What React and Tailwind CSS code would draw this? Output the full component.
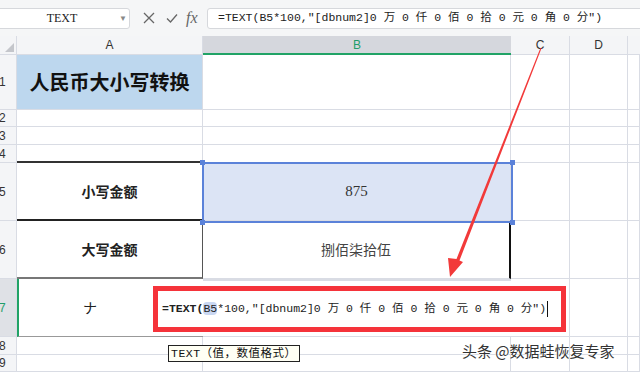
const LINE = 'border-[#d9dce4]'
const CJK = "font-['Noto_Sans_CJK_SC',sans-serif]"
const MONO = "font-['Liberation_Mono','Noto_Sans_CJK_SC',monospace]"

const COLS = 'grid-cols-[17px_186px_308px_59px_58px_1fr]'

function RowHead({ n, active }) {
  return (
    <div className={`flex items-center border-r border-b ${LINE} ${active ? 'bg-[#dfe1e6] text-[#1f9e6a]' : 'bg-[#f4f5f7] text-[#333]'} text-[12px] font-['Liberation_Sans',sans-serif] -indent-[1px]`}>
      {n}
    </div>
  )
}

function Cell({ className = '', children }) {
  return <div className={`flex items-center justify-center border-r border-b ${LINE} ${className}`}>{children}</div>
}

function Formula() {
  return (
    <span className={`${MONO} text-[11.5px] text-[#222] whitespace-pre`}>
      <span className="font-bold">=TEXT(</span>
      <span className="bg-[#c9d7f2] rounded-[4px]">B5</span>
      {'*100,"[dbnum2]0 万 0 仟 0 佰 0 拾 0 元 0 角 0 分")'}
    </span>
  )
}

export default function App() {
  return (
    <div className="relative w-[640px] h-[372px] overflow-hidden bg-white">
      {/* toolbar */}
      <div className="h-[36px] bg-[#f5f6f7] flex items-center">
        <div className="ml-[-4px] w-[134px] h-[21px] bg-white border border-[#d6d8dc] rounded-[3px] flex items-center">
          <span className="flex-1 text-center pl-[8px] text-[12px] text-[#222] font-['Liberation_Serif',serif]">TEXT</span>
          <span className="w-[10px] text-[8px] text-[#888]">▼</span>
        </div>
        <div className="w-[77px] flex items-center text-[#666]">
          <svg width="14" height="14" viewBox="0 0 14 14" className="ml-[12px]">
            <path d="M2 2L12 12M12 2L2 12" stroke="#666" strokeWidth="1.3" fill="none" />
          </svg>
          <svg width="14" height="14" viewBox="0 0 14 14" className="ml-[9px]">
            <path d="M2 7.5L5.5 11L12 3.5" stroke="#666" strokeWidth="1.3" fill="none" />
          </svg>
          <span className="ml-[7px] text-[16px] italic font-['Liberation_Serif',serif] leading-none">fx</span>
        </div>
        <div className="flex-1 h-[21px] mr-[-4px] bg-white border border-[#d6d8dc] rounded-[3px] flex items-center pl-[10px]">
          <span className={`${MONO} text-[11.5px] text-[#222] whitespace-pre`}>{'=TEXT(B5*100,"[dbnum2]0 万 0 仟 0 佰 0 拾 0 元 0 角 0 分")'}</span>
        </div>
      </div>

      {/* sheet */}
      <div className={`grid ${COLS} grid-rows-[19px_55px_17px_18px_18px_58px_58px_58px_18px_17px] font-['Liberation_Sans',sans-serif]`}>
        {/* header row */}
        <div className={`bg-[#f4f5f7] border-r border-b ${LINE} flex items-end justify-end p-[2px]`}>
          <div className="w-0 h-0 border-l-[9px] border-l-transparent border-b-[9px] border-b-[#c4c6cb]" />
        </div>
        <div className={`bg-[#f4f5f7] border-r border-b ${LINE} flex items-center justify-center text-[12px] text-[#333]`}>A</div>
        <div className="bg-[#d5d7dd] border-b-2 border-[#21a366] flex items-center justify-center text-[12px] text-[#1f9e6a]">B</div>
        <div className={`bg-[#f4f5f7] border-r border-b ${LINE} flex items-center justify-center text-[12px] text-[#333]`}>C</div>
        <div className={`bg-[#f4f5f7] border-r border-b ${LINE} flex items-center justify-center text-[12px] text-[#333]`}>D</div>
        <div className={`bg-[#f4f5f7] border-b ${LINE}`} />

        {/* row 1 */}
        <RowHead n="1" />
        <Cell className={`bg-[#bdd7ee] ${CJK} text-[20px] font-bold text-[#111]`}>人民币大小写转换</Cell>
        <Cell />
        <Cell />
        <Cell />
        <Cell />

        {/* rows 2-4 */}
        <RowHead n="2" /><Cell /><Cell /><Cell /><Cell /><Cell />
        <RowHead n="3" /><Cell /><Cell /><Cell /><Cell /><Cell />
        <RowHead n="4" /><Cell className="border-b-2 border-b-[#333]" /><Cell /><Cell /><Cell /><Cell />

        {/* row 5 */}
        <RowHead n="5" />
        <Cell className={`border-b-2 border-b-[#222] border-r-[#555] ${CJK} text-[14px] font-bold text-[#222]`}>小写金额</Cell>
        <Cell className="bg-[#dce4f5] text-[15px] text-[#333] font-['Liberation_Serif',serif]">875</Cell>
        <Cell /><Cell /><Cell />

        {/* row 6 */}
        <RowHead n="6" />
        <Cell className={`border-b-2 border-b-[#777] border-r-[#555] ${CJK} text-[14px] font-bold text-[#222]`}>大写金额</Cell>
        <Cell className={`border-r-2 border-r-[#111] ${CJK} text-[14px] text-[#444]`}>捌佰柒拾伍</Cell>
        <Cell /><Cell /><Cell />

        {/* row 7 */}
        <RowHead n="7" active />
        <Cell className={`border-l-2 border-l-[#21a366] border-r-0 border-b-[#999] ${CJK} text-[14px] text-[#222]`}>
          <span className="mr-[42px]">ナ</span>
        </Cell>
        <Cell className="border-y-2 border-[#21a366] border-r-0" />
        <Cell /><Cell /><Cell />

        {/* rows 8-9 */}
        <RowHead n="8" /><Cell /><Cell /><Cell /><Cell /><Cell />
        <RowHead n="9" /><Cell /><Cell /><Cell /><Cell /><Cell />
      </div>

      {/* B5 selection */}
      <div className="absolute left-[202px] top-[162px] w-[311px] h-[61px] border-2 border-[#5b82d9] pointer-events-none">
        <div className="absolute -left-[4px] -top-[4px] w-[5px] h-[5px] bg-[#5b82d9]" />
        <div className="absolute -right-[4px] -top-[4px] w-[5px] h-[5px] bg-[#5b82d9]" />
        <div className="absolute -left-[4px] -bottom-[4px] w-[5px] h-[5px] bg-[#5b82d9]" />
        <div className="absolute -right-[4px] -bottom-[4px] w-[5px] h-[5px] bg-[#5b82d9]" />
      </div>

      {/* in-cell editor */}
      <div className="absolute left-[153px] top-[286px] w-[413px] h-[46px] border-[5px] border-[#f5333a] bg-white flex items-center pl-[4px]">
        <Formula />
        <span className="w-[1px] h-[16px] bg-[#111] ml-[1px]" />
      </div>

      {/* tooltip */}
      <div className={`absolute left-[168px] top-[345px] h-[17px] px-[2px] border border-[#222] bg-[#fffff4] flex items-center ${MONO} text-[11.5px] tracking-[0.5px] text-[#111] whitespace-pre`}>
        TEXT（值，数值格式）
      </div>

      {/* arrow */}
      <svg className="absolute left-0 top-0 pointer-events-none" width="640" height="372">
        <polygon points="541.6,48 540.4,48 456.5,259 448,258 450,277 463,262 459.5,260.5" fill="#f23a3a" />
      </svg>

      {/* watermark */}
      <div className={`absolute left-[462px] top-[340px] ${CJK} text-[15px] text-[#333] [text-shadow:0_0_2px_#fff,0_0_2px_#fff]`}>
        头条 @数据蛙恢复专家
      </div>
    </div>
  )
}
